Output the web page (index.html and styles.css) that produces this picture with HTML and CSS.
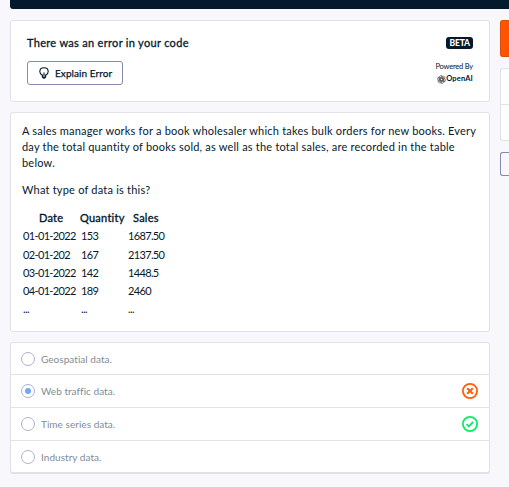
FILE: index.html
```html
<!DOCTYPE html>
<html lang="en">
<head>
<meta charset="utf-8">
<title>Exercise</title>
<link rel="stylesheet" href="styles.css">
</head>
<body>
<div class="page">
  <main class="main">
    <div class="console"></div>
    <section class="card error">
      <div class="error-left">
        <h1>There was an error in your code</h1>
        <button class="explain">
          <svg width="10" height="12" viewBox="0 0 10 12" fill="none" stroke="#05192d" stroke-width="1.1"><path d="M3.2 8.2C1.7 7.4.8 6.1.8 4.6.8 2.4 2.6.7 5 .7s4.200 1.700 4.200 3.900c0 1.500-.9 2.800-2.400 3.600M3.400 7.500v2.700L5 11.300l1.600-1.100V7.500M5 11V5.500"/></svg>
          <span>Explain Error</span>
        </button>
      </div>
      <div class="error-right">
        <span class="beta">BETA</span>
        <span class="powered">Powered By</span>
        <span class="openai">
          <svg width="9" height="9" viewBox="0 0 24 24" fill="none" stroke="#222" stroke-width="1.3"><path id="p" d="M12 8L6.500 11.200V5.500a4.500 4.500 0 0 1 8-2.700L9 6v6"/><use href="#p" transform="rotate(60 12 12)"/><use href="#p" transform="rotate(120 12 12)"/><use href="#p" transform="rotate(180 12 12)"/><use href="#p" transform="rotate(240 12 12)"/><use href="#p" transform="rotate(300 12 12)"/></svg>
          <b>OpenAI</b>
        </span>
      </div>
    </section>
    <section class="card question">
      <p>A sales manager works for a book wholesaler which takes bulk orders for new books. Every<br>day the total quantity of books sold, as well as the total sales, are recorded in the table<br>below.</p>
      <p class="ask">What type of data is this?</p>
      <table>
        <thead><tr><th>Date</th><th class="qty">Quantity</th><th class="sales">Sales</th></tr></thead>
        <tbody>
          <tr><td>01-01-2022</td><td>153</td><td>1687.50</td></tr>
          <tr><td>02-01-202</td><td>167</td><td>2137.50</td></tr>
          <tr><td>03-01-2022</td><td>142</td><td>1448.5</td></tr>
          <tr><td>04-01-2022</td><td>189</td><td>2460</td></tr>
          <tr><td>...</td><td>...</td><td>...</td></tr>
        </tbody>
      </table>
    </section>
    <section class="card options">
      <div class="option"><i class="radio"></i><span>Geospatial data.</span></div>
      <div class="option"><i class="radio on"></i><span>Web traffic data.</span>
        <svg class="mark" width="16" height="16" viewBox="0 0 16 16" fill="none" stroke="#ff5c0a" stroke-width="1.800"><circle cx="8" cy="8" r="7.100"/><path d="M5.200 5.200l5.600 5.600M10.800 5.200l-5.600 5.600" stroke-width="2"/></svg></div>
      <div class="option"><i class="radio"></i><span>Time series data.</span>
        <svg class="mark" width="16" height="16" viewBox="0 0 16 16" fill="none" stroke="#03ef62" stroke-width="1.800"><circle cx="8" cy="8" r="7.100"/><path d="M4.600 8.200l2.300 2.200 4.300-4.600"/></svg></div>
      <div class="option last"><i class="radio"></i><span>Industry data.</span></div>
    </section>
  </main>
  <aside class="side">
    <div class="side-bar"></div>
    <div class="side-submit"></div>
    <div class="side-card"><div></div></div>
    <div class="side-button"></div>
  </aside>
</div>
</body>
</html>
```
FILE: styles.css
```css
* { box-sizing: border-box; }
body { margin: 0; background: #f7f7fc; color: #05192d; font: 11px/16px Lato, "Liberation Sans", sans-serif; }
.page { display: flex; gap: 10px; width: 509px; height: 487px; padding-left: 10px; }
.main { width: 480px; flex: none; }
.side { flex: 1; }
.console { height: 9px; background: #05192d; margin: 0 -10px 11px 0; border-radius: 0 0 0 3px; }
.card { background: #fff; border: 1px solid #e1e1ea; border-radius: 3px; width: 480px; }
.error { height: 82px; display: flex; justify-content: space-between; padding: 14px 16px 0 16px; }
h1 { margin: 0 0 10px; font-size: 11px; line-height: 16px; font-weight: 400; -webkit-text-stroke: .3px #05192d; letter-spacing: .31px; white-space: nowrap; }
.explain { display: flex; align-items: center; width: 96px; height: 24px; padding: 0 0 0 11px; gap: 6px; background: #fff; border: 1px solid #848ab0; border-radius: 3px; font: 400 10px Lato, sans-serif; -webkit-text-stroke: .25px #05192d; letter-spacing: .08px; color: #05192d; white-space: nowrap; }
.explain svg { flex: none; }
.error-right { display: flex; flex-direction: column; align-items: flex-end; }
.beta { height: 12px; margin-top: 2px; padding: 0 3px; border-radius: 3px; background: #05192d; color: #fff; font: 900 8.500px/12px Lato, sans-serif; letter-spacing: -.1px; }
.powered { margin-top: 12px; font-size: 7.500px; line-height: 12px; letter-spacing: -.2px; }
.openai { display: flex; align-items: center; height: 12px; font-size: 7.500px; letter-spacing: .15px; }
.question { height: 220px; margin-top: 10px; padding: 10px 11px 0; }
p { margin: 0; white-space: nowrap; letter-spacing: .21px; }
.ask { margin-top: 11px; }
table { margin-top: 11px; border-spacing: 0; table-layout: fixed; width: 160px; }
th, td { padding: 0 0 0 1px; text-align: left; line-height: 18.300px; height: 18.300px; white-space: nowrap; }
th { font-weight: 400; -webkit-text-stroke: .35px #05192d; font-size: 11px; letter-spacing: .25px; width: 58px; padding-left: 17px; }
th.qty { width: 47px; padding-left: 0; }
th.sales { width: 55px; padding-left: 6px; }
td { font-size: 11px; letter-spacing: -.65px; }
.options { height: 131px; margin-top: 10px; box-shadow: 0 1px #e1e1ea; }
.option { display: flex; align-items: center; height: 33px; padding: 0 11px 0 10px; border-bottom: 1px solid #e1e1ea; color: #828c96; font-size: 10px; letter-spacing: .04px; }
.option:first-child { height: 32px; }
.option.last { height: 31px; border: 0; }
.radio { width: 14px; height: 14px; border: 1px solid #aeb1cb; border-radius: 50%; margin-right: 6px; display: flex; align-items: center; justify-content: center; }
.radio.on::after { content: ""; width: 6px; height: 6px; border-radius: 50%; background: #6ea8ff; }
.mark { margin-left: auto; }
.side-bar { height: 9px; background: #05192d; margin-bottom: 11px; }
.side-submit { height: 37px; background: #ff5400; border: 1px solid #dd4d08; border-right: 0; border-radius: 3px 0 0 3px; }
.side-card { height: 73px; margin-top: 11px; background: #fff; border: 1px solid #e1e1ea; border-right: 0; border-radius: 3px 0 0 3px; }
.side-card div { height: 36px; border-bottom: 1px solid #e1e1ea; }
.side-button { height: 24px; margin-top: 11px; border: 1px solid #848ab0; border-right: 0; border-radius: 3px 0 0 3px; }
```
